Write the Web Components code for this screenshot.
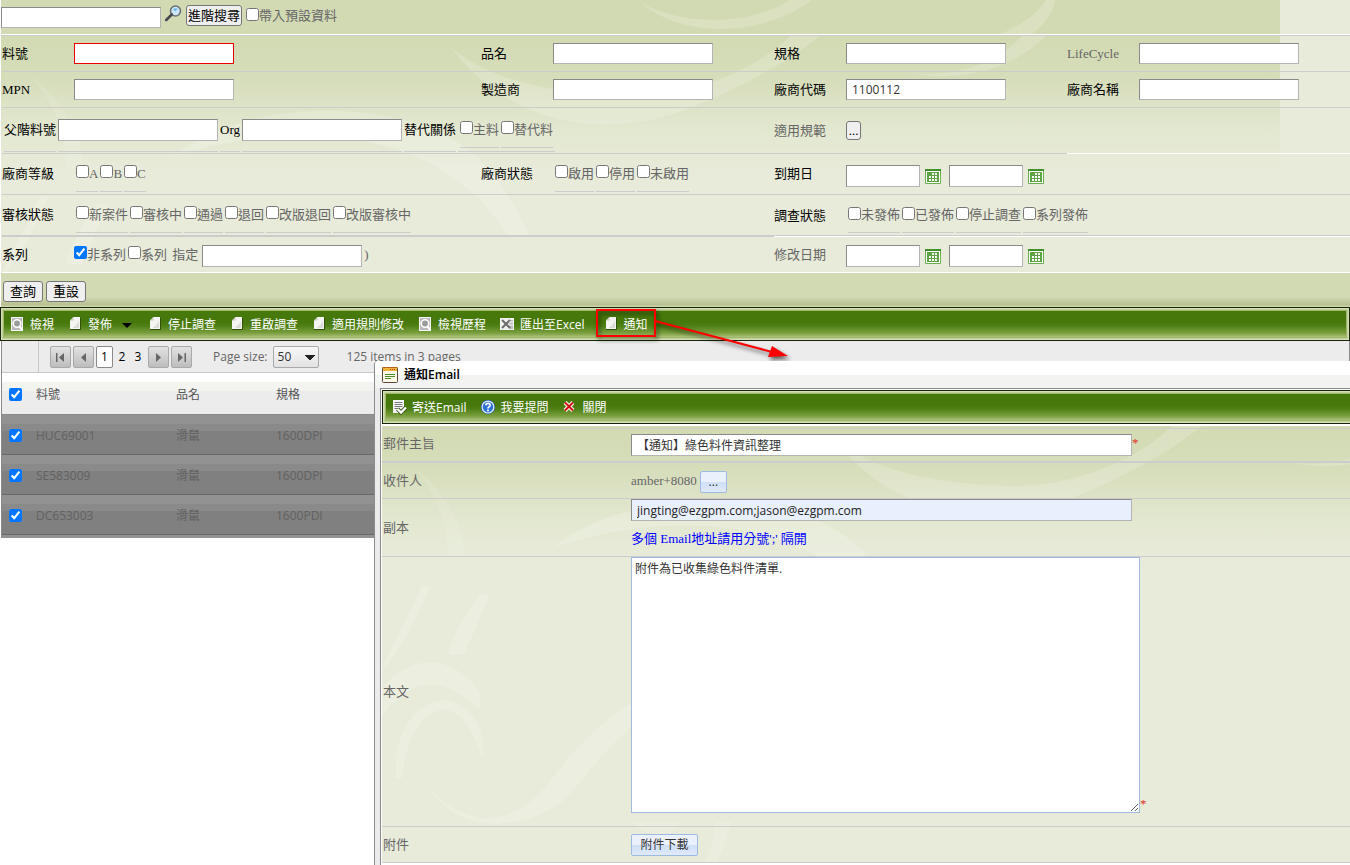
<!DOCTYPE html>
<html lang="zh-Hant">
<head>
<meta charset="utf-8">
<title>綠色料件查詢</title>
<style>
html, body { margin: 0; background: #fff; }
body { font-family: "Liberation Serif", "Noto Sans CJK TC", serif; font-size: 13px; line-height: 18px; color: #000; }
</style>
</head>
<body>
<parts-page></parts-page>

<script>
const UI = '"Open Sans", "Noto Sans CJK TC", sans-serif';

/* Leaf-swirl backdrop shared by the search form and the dialog form. */
const leaf = `<svg xmlns="http://www.w3.org/2000/svg" width="1280" height="440">
<defs><linearGradient id="g" x1="0" y1="0" x2="0" y2="1"><stop offset="0" stop-color="#d2dab3"/><stop offset=".3" stop-color="#d6ddba"/><stop offset=".7" stop-color="#e3e8d1"/><stop offset="1" stop-color="#e8ebda"/></linearGradient></defs>
<rect width="1280" height="138" fill="url(#g)"/>
<g fill="#fff" fill-opacity=".18">
<path d="M450 10C510 92 610 104 690 72C760 44 800 16 820 0H790C760 30 700 58 640 60C560 60 490 46 450 10z"/>
<path d="M905 36C960 44 1000 24 1022 0H1046C1020 26 970 50 905 36z"/>
<path d="M30 40C50 60 64 90 66 130H84C82 100 60 60 30 40z" fill-opacity=".1"/>
<path d="M170 122C230 74 340 60 430 92C480 112 506 150 530 200H508C480 156 440 122 370 106C300 92 230 102 170 122z"/>
<path d="M0 262C30 226 70 228 98 266V284C60 248 30 250 0 290z"/>
<path d="M14 352C10 306 36 272 66 274C96 282 104 312 100 332C88 294 74 282 58 284C34 290 24 320 20 352z"/>
<path d="M48 362C90 410 140 396 172 350C210 300 260 260 320 250C250 290 220 330 184 372C150 402 80 414 48 362z"/>
<path d="M98 168H108C96 196 90 212 82 228H66C70 210 84 186 98 168zM40 160H48C36 190 20 224 0 244C10 216 28 190 40 160z"/>
<path d="M250 396H300C296 412 260 412 250 396zM334 396H350C344 412 340 426 334 440H320C328 426 332 412 334 396z" fill-opacity=".14"/>
</g></svg>`;
const swirl = `<svg xmlns="http://www.w3.org/2000/svg" width="1280" height="34"><rect width="1280" height="34" fill="#d2dab3"/><g fill="#fff" fill-opacity=".18"><path d="M640 2C680 26 750 26 790 0H812C770 32 690 44 640 2z"/><path d="M1000 34C1025 24 1040 10 1046 0H1056C1052 12 1044 26 1032 34z"/></g></svg>`;
const svgUrl = s => `url("data:image/svg+xml,${encodeURIComponent(s)}")`;
document.documentElement.style.setProperty('--leaf', svgUrl(leaf));
document.documentElement.style.setProperty('--swirl', svgUrl(swirl));

const INPUT_CSS = `
input[type=text], textarea { box-sizing: border-box; margin: 0; border: 1px solid; border-color: #8a8a8a #b4b4b4 #b4b4b4 #8a8a8a; border-radius: 0; background: #fff; font: 12px/16px ${UI}; color: #333; padding: 2px 5px; outline: 0; }
input[type=text] { width: 160px; height: 21px; flex: none; }`;
const BUTTON_CSS = `
button { box-sizing: border-box; height: 21px; margin: 0; padding: 0 1px; border: 1px solid #767676; border-radius: 3px; background: #efefef; color: #000; font: 13px/18px "Liberation Serif", "Noto Sans CJK TC", serif; }`;

class Base extends HTMLElement {
  connectedCallback() {
    if (this.shadowRoot) return;
    this.attachShadow({ mode: 'open' }).innerHTML = `<style>${this.css()}</style>${this.html()}`;
  }
  attr(n) { return this.getAttribute(n) || ''; }
  css() { return ''; }
  html() { return '<slot></slot>'; }
}

const ICONS = {
  search: `<circle cx="10.500" cy="6" r="5" fill="#cfe8f8" stroke="#6b7076" stroke-width="1.600"/><path d="M8 4.500q2.500-2.500 5 0q-2 0-2.500 2q-1.500-1-2.500-2z" fill="#6fb7ec"/><path d="M6.800 9.500L1.200 15" stroke="#454a50" stroke-width="2.600" stroke-linecap="round"/>`,
  calendar: `<path d="M.5 1.500h15v13h-15z" fill="#fff" stroke="#6ab04f"/><path d="M0 0h16v2H0z" fill="#3f8f2d"/><path d="M2 3h12v10H2z" fill="#5da544"/><path d="M7 4h2v2H7zM10 4h2v2h-2zM4 7h2v2H4zM7 7h2v2H7zM10 7h2v2h-2zM4 10h2v2H4zM7 10h2v2H7zM10 10h2v2h-2z" fill="#fff"/>`,
  view: `<path d="M2 1h12v14H2z" fill="#f6f6f6"/><path d="M3 2h10v12H3z" fill="#b9b9b9"/><circle cx="8" cy="7.500" r="3.700" fill="#999" stroke="#fff" stroke-width="1.600"/><path d="M10.500 10.500l3 3.500" stroke="#fff" stroke-width="2"/>`,
  doc: `<path d="M6.500 1H13v12H3V4.500z" fill="#f4f4f0"/><path d="M3 4.500L6.500 1v3.500z" fill="#c9cfc0"/><path d="M3 13.500h10.500V2" fill="none" stroke="#31500c"/><path d="M10 8l2-3v7H6z" fill="#dcdcd8"/>`,
  excel: `<path d="M1 2h14v12H1z" fill="#f1f1f1"/><path d="M10 4h4v9h-4z" fill="#bcbcbc"/><path d="M3 4l8 8M11 4l-8 8" stroke="#6b6b6b" stroke-width="2"/><path d="M10 6h4M10 9h4" stroke="#fff"/>`,
  send: `<path d="M2 1h11v13H2z" fill="#f7f7f7"/><path d="M3.500 3.500h8M3.500 5.500h8M3.500 7.500h8M3.500 9.500h5" stroke="#777"/><path d="M6.500 10l3.500 3.500L15 8.500" fill="none" stroke="#33500f" stroke-width="4"/><path d="M6.500 10l3.500 3.500L15 8.500" fill="none" stroke="#fff" stroke-width="2.400"/>`,
  help: `<circle cx="8" cy="8" r="7.200" fill="#1c4fa6"/><circle cx="8" cy="8" r="5.900" fill="#2d72d2" stroke="#dcebff" stroke-width="1.300"/><path d="M5.900 6.400C6 3.600 10.400 3.900 10.100 6.400C9.900 7.800 8 7.800 8 9.500" fill="none" stroke="#fff" stroke-width="1.700"/><path d="M7.100 10.600h1.800v1.700H7.100z" fill="#fff"/>`,
  close: `<path d="M3 3.500l8 8M11 3.500l-8 8" stroke="#fff" stroke-width="4"/><path d="M3 3.500l8 8M11 3.500l-8 8" stroke="#d01010" stroke-width="2"/>`,
  form: `<rect x=".5" y=".5" width="15" height="15" rx="1" fill="#fdfbe8" stroke="#5a4636"/><path d="M1 1h14v3H1z" fill="#f0b63c"/><path d="M.5 .5h15" stroke="#b5651c"/><path d="M8 2.500h6" stroke="#c23a10" stroke-dasharray="1 1"/><path d="M3 7.500h10M3 9.500h10M3 11.500h6" stroke="#4f8a2a"/>`
};
customElements.define('ui-icon', class extends Base {
  css() { return `:host { display: block; width: 16px; height: 16px; flex: none; } svg { display: block; overflow: visible; }`; }
  html() { return `<svg width="16" height="16" viewBox="0 0 16 16" fill="none" aria-hidden="true">${ICONS[this.attr('name')]}</svg>`; }
});

customElements.define('check-item', class extends Base {
  css() { return `:host { display: block; box-sizing: border-box; height: 35px; border-bottom: 1px solid #ccc; color: #666; }
    :host([plain]) { border: 0; height: auto; }
    label { display: flex; align-items: center; height: 100%; white-space: nowrap; }
    input { width: 13px; height: 13px; margin: 0 0 4px; flex: none; }`; }
  html() { return `<label><input type="checkbox" ${this.hasAttribute('checked') ? 'checked' : ''}><slot></slot></label>`; }
});

/* A labelled text box; "compact" is the underlined inline form. */
customElements.define('text-cell', class extends Base {
  css() { return `:host { display: flex; align-items: center; box-sizing: border-box; min-width: 0; border-bottom: 1px solid #ccc; }
    :host([muted]) { color: #666; }
    label { width: 72px; flex: none; white-space: nowrap; }
    :host([compact]) { gap: 2px; border: 0; height: 42px; }
    :host([compact]) label { width: auto; }
    :host([compact]) label, :host([compact]) span { display: flex; align-items: center; box-sizing: border-box; height: 42px; border-bottom: 1px solid #ccc; }
    ${INPUT_CSS}
    :host([compact]) input[type=text] { height: 22px; }
    :host([required]) input[type=text] { border-color: #e00; }`; }
  html() { return `<label for="box">${this.attr('label')}</label><span><input id="box" type="text" value="${this.attr('value')}"></span>`; }
});

/* A labelled group of arbitrary controls. */
customElements.define('group-cell', class extends Base {
  css() { return `:host { display: flex; align-items: center; box-sizing: border-box; min-width: 0; border-bottom: 1px solid var(--line, #ccc); }
    :host([muted]) .name { color: #666; }
    .name { width: 72px; flex: none; white-space: nowrap; }
    .items { display: flex; align-items: center; gap: 2px; }
    :host([inset]) .items { padding-left: 2px; }`; }
  html() { return `${this.attr('label') ? `<span class="name">${this.attr('label')}</span>` : ''}<div class="items" role="group" aria-label="${this.attr('label') || '料件'}"><slot></slot></div>`; }
});

customElements.define('date-range', class extends Base {
  css() { return `:host { display: flex; align-items: center; gap: 5px; padding-top: 3px; }
    ${INPUT_CSS} input[type=text] { width: 74px; height: 22px; }
    ui-icon { margin-top: 2px; }
    ui-icon + input { margin-left: 3px !important; }`; }
  html() { const n = this.attr('label'); return `<input type="text" aria-label="${n} 起"><ui-icon name="calendar"></ui-icon><input type="text" aria-label="${n} 迄"><ui-icon name="calendar"></ui-icon>`; }
});

customElements.define('search-bar', class extends Base {
  css() { return `:host { display: flex; align-items: flex-start; height: 34px; margin-left: 1px; border-bottom: 1px solid #fff; background: var(--swirl) -1px 0 no-repeat #e8ebda; }
    ${INPUT_CSS} ${BUTTON_CSS}
    input[type=text] { margin-top: 7px; }
    ui-icon { margin: 5px 5px 0 4px; }
    button { margin-top: 5px; }
    check-item { margin: 7px 0 0 4px; }`; }
  html() { return `<input type="text" aria-label="搜尋"><ui-icon name="search"></ui-icon><button type="button">進階搜尋</button><check-item plain>帶入預設資料</check-item>`; }
});

customElements.define('search-form', class extends Base {
  css() { return `:host { display: block; margin-left: 1px; border-top: 1px solid #ccc; background: var(--leaf) -1px 0 no-repeat #e8ebda; }
    .row { display: grid; grid-template-columns: minmax(0, 479fr) minmax(0, 293fr) minmax(0, 293fr) minmax(0, 283fr); height: 36px; padding-left: 1px; }
    .tall { height: 46px; } .mid { height: 41px; } .dbl { height: 42px; }
    .wide { grid-column: span 2; }
    .dbl group-cell { border-bottom: 1px solid #ccc; }
    .dbl .wide:first-child { border-bottom-width: 2px; }
    .dbl .late { box-shadow: inset 0 -1px #ccc; border-bottom-color: #fff; }
    .last { --line: #fff; }
    .blank { border-bottom: 1px solid #fff; }
    .sub { display: flex; align-items: center; box-sizing: border-box; height: 42px; gap: 2px; padding: 0 2px; border-bottom: 1px solid #ccc; }
    .cap { display: flex; align-items: center; box-sizing: border-box; height: 42px; border-bottom: 1px solid #ccc; white-space: nowrap; }
    ${INPUT_CSS} ${BUTTON_CSS}
    .last input[type=text] { height: 22px; margin: 2px 0 0 2px; }
    .muted { color: #666; white-space: nowrap; }
    .dots { width: 15px; height: 19px; padding: 0; }`; }
  html() {
    const checks = (...a) => a.map(t => `<check-item>${t}</check-item>`).join('');
    return `
    <div class="row"><text-cell label="料號" required></text-cell><text-cell label="品名"></text-cell><text-cell label="規格"></text-cell><text-cell label="LifeCycle" muted></text-cell></div>
    <div class="row"><text-cell label="MPN"></text-cell><text-cell label="製造商"></text-cell><text-cell label="廠商代碼" value="1100112"></text-cell><text-cell label="廠商名稱"></text-cell></div>
    <div class="row tall"><group-cell class="wide" inset><text-cell compact label="父階料號"></text-cell><text-cell compact label="Org"></text-cell><span class="cap">替代關係</span><div class="sub">${checks('主料', '替代料')}</div></group-cell>
      <group-cell label="適用規範" muted><button class="dots" type="button">...</button></group-cell><span class="blank"></span></div>
    <div class="row mid"><group-cell label="廠商等級" inset>${checks('A', 'B', 'C')}</group-cell><group-cell label="廠商狀態" inset>${checks('啟用', '停用', '未啟用')}</group-cell><group-cell class="wide" label="到期日"><date-range label="到期日"></date-range></group-cell></div>
    <div class="row dbl"><group-cell class="wide" label="審核狀態" inset>${checks('新案件', '審核中', '通過', '退回', '改版退回', '改版審核中')}</group-cell><group-cell class="wide late" label="調查狀態" inset>${checks('未發佈', '已發佈', '停止調查', '系列發佈')}</group-cell></div>
    <div class="row last"><group-cell class="wide" label="系列"><check-item plain checked>非系列</check-item><check-item plain>系列</check-item><label class="muted" for="series">&nbsp;指定</label><input id="series" type="text"><span class="muted">)</span></group-cell><group-cell class="wide" label="修改日期" muted><date-range label="修改日期"></date-range></group-cell></div>`;
  }
});

customElements.define('action-bar', class extends Base {
  css() { return `:host { display: flex; align-items: center; gap: 3px; box-sizing: border-box; height: 34px; margin-left: 1px; padding: 3px 2px 0; background: linear-gradient(#d2dab3 24px, #b6bf90 32px, #cdd5a9 33px); }
    ${BUTTON_CSS} button { width: 40px; }`; }
  html() { return `<button type="submit">查詢</button><button type="reset">重設</button>`; }
});

customElements.define('tool-bar', class extends Base {
  css() { return `:host { display: flex; align-items: center; gap: 13px; box-sizing: border-box; height: 34px; padding: 2px 8px 0; border: 1px solid #16240a; position: relative; z-index: 1;
      box-shadow: inset 0 0 0 1px #d5dfb7, inset 0 0 0 2px #c2d09b, inset 0 0 0 3px #9fb76b; background: linear-gradient(#47780c 14px, #4f8016 18px, #7a9f3e 25px, #9fb76b 28px, #c2d09b 30px); }`; }
});

customElements.define('tool-item', class extends Base {
  css() { return `:host { display: block; flex: none; position: relative; }
    :host([marked]) { margin-left: 5px; }
    button { display: flex; align-items: center; gap: 5px; margin: 0; padding: 0; border: 0; background: none; color: #fff; font: 12px/16px ${UI}; white-space: nowrap; }
    ui-icon { margin-bottom: 2px; }
    i { width: 0; border: solid transparent; border-width: 5px 5px 0; border-top-color: #000; margin: 0 2px 0 5px; }
    svg { position: absolute; left: -9px; top: -9px; overflow: visible; pointer-events: none; filter: drop-shadow(2px 3px 2px rgba(0, 0, 0, .6)); }`; }
  html() { return `<button type="button"><ui-icon name="${this.attr('icon')}"></ui-icon><span><slot></slot></span>${this.hasAttribute('menu') ? '<i></i>' : ''}</button>
    ${this.hasAttribute('marked') ? `<svg width="200" height="60" fill="none" aria-hidden="true"><rect x="3" y="3" width="58" height="26" stroke="#f00" stroke-width="2"/><path d="M61 14L182 46" stroke="#f00" stroke-width="2"/><path d="M194 49L174 50L178 39z" fill="#f00"/></svg>` : ''}`; }
});

customElements.define('page-nav', class extends Base {
  css() { return `:host { display: flex; height: 31px; border-bottom: 1px solid #c8c8c8; background: #ececec; font: 12px/16px ${UI}; color: #666; }
    .edge { width: 36px; border-right: 1px solid #c8c8c8; flex: none; }
    .bar { display: flex; align-items: center; gap: 2px; padding: 1px 0 0 11px; white-space: nowrap; }
    button { box-sizing: border-box; width: 21px; height: 22px; padding: 0; border: 1px solid #a9a9a9; border-radius: 2px; background: linear-gradient(#e2e2e2, #bdbdbd); display: grid; place-items: center; }
    nav { display: flex; gap: 2px; align-items: center; }
    a { box-sizing: border-box; width: 14px; line-height: 20px; text-align: center; color: #000; text-decoration: none; border: 1px solid transparent; }
    a[aria-current] { width: 17px; background: #fff; border-color: #8a8a8a; border-radius: 2px; }
    a:nth-of-type(3) { margin-right: 1px; }
    .size { margin: 0 3px 0 19px; }
    select { appearance: none; box-sizing: border-box; width: 46px; height: 22px; padding: 0 4px; border: 1px solid #a9a9a9; border-radius: 2px; color: #333; font: 12px/16px ${UI};
      background: linear-gradient(45deg, transparent 50%, #222 50%) 31px 8px / 5px 5px no-repeat, linear-gradient(-45deg, transparent 50%, #222 50%) 35px 8px / 5px 5px no-repeat, linear-gradient(#f8f8f8, #e2e2e2);
      background: conic-gradient(from -45deg at 50% 100%, #222 90deg, transparent 0) 31px 8px / 10px 5px no-repeat, linear-gradient(#f8f8f8, #e2e2e2); }
    .total { margin-left: 26px; }`; }
  html() {
    const b = (n, d) => `<button type="button" aria-label="${n}"><svg width="11" height="11" aria-hidden="true"><path d="${d}" fill="#666"/></svg></button>`;
    return `<div class="edge"></div><div class="bar"><nav aria-label="頁碼">${b('第一頁', 'M1 1h1.500v9H1zM9 1v9L4 5.500z')}${b('上一頁', 'M8 1v9L3 5.500z')}
      <a href="#1" aria-current="page">1</a><a href="#2">2</a><a href="#3">3</a>${b('下一頁', 'M3 1v9l5-4.500z')}${b('最後頁', 'M2 1v9l5-4.500zM8.500 1H10v9H8.500z')}</nav>
      <label class="size" for="ps">Page size:</label><select id="ps"><option>50</option></select><span class="total">125 items in 3 pages</span></div>`;
  }
});

customElements.define('part-grid', class extends Base {
  css() { return `:host { display: block; border: solid #888; border-width: 0 1px; margin-left: 1px; }
    .box { border-bottom: 3px solid #929292; }
    table { width: 100%; table-layout: fixed; border-collapse: collapse; font: 12px/16px ${UI}; color: #626262; }
    th { font-weight: normal; text-align: left; color: #555; }
    th, td { padding: 2px 0 0 1px; vertical-align: middle; }
    thead tr { height: 42px; background: linear-gradient(#fff 9px, #f3f3f0 9px 18px, #ececec 18px); box-shadow: inset 0 -1px #888; }
    tbody tr { height: 40px; background: linear-gradient(#929292 9px, #8a8a8a 9px 16px, #808080 16px 39px, #686868 39px); }
    td:first-child, th:first-child { padding: 0 0 0 7px; }
    input { display: block; width: 13px; height: 13px; margin: 0; }`; }
  html() {
    const rows = [['HUC69001', '滑鼠', '1600DPI'], ['SE583009', '滑鼠', '1600DPI'], ['DC653003', '滑鼠', '1600PDI']];
    return `<page-nav></page-nav><div class="box"><table><colgroup><col style="width:33px"><col style="width:140px"><col style="width:100px"><col></colgroup>
      <thead><tr><th><input type="checkbox" checked aria-label="全選"></th><th>料號</th><th>品名</th><th>規格</th></tr></thead>
      <tbody>${rows.map(r => `<tr><td><input type="checkbox" checked aria-label="${r[0]}"></td>${r.map(c => `<td>${c}</td>`).join('')}</tr>`).join('')}</tbody></table></div>`;
  }
});

customElements.define('mail-dialog', class extends Base {
  css() { return `:host { display: flex; flex-direction: column; box-sizing: border-box; border: solid #8b8b8b; border-width: 0 0 0 1px; border-top-left-radius: 4px; background: #ebebeb; overflow: hidden; }
    header { display: flex; align-items: center; gap: 6px; height: 27px; flex: none; padding: 0 7px; box-sizing: border-box; background: linear-gradient(#fff 14px, #f3f3f2 14px); }
    h2 { margin: 0; font: 600 12px/16px ${UI}; }
    .body { flex: 1; margin-left: 5px; border: solid #888; border-width: 1px 0 0 1px; padding: 1px 0 0 1px; background: #fff; }
    tool-bar { margin-right: -4px; }
    form { margin-top: 2px; background: var(--leaf) no-repeat #e8ebda; padding-top: 2px; color: #666; }
    .row { display: grid; grid-template-columns: 248px minmax(0, 1fr); align-items: center; box-sizing: border-box; height: 36px; padding-left: 1px; border-bottom: 1px solid #ccc; }
    .row:first-child { height: 35px; border-top: 1px solid #ccc; border-bottom-width: 2px; }
    .row.cc { height: 58px; } .row.text { height: 270px; }
    .val { display: flex; align-items: center; gap: 3px; }
    ${INPUT_CSS}
    .val input[type=text] { width: 501px; height: 22px; }
    .row:first-child .val { gap: 0; align-items: flex-start; }
    .row:first-child label { padding-bottom: 2px; }
    .cc .val { display: block; align-self: start; }
    .cc input[type=text] { display: block; background: #e8effd; color: #222; }
    .cc p { margin: 9px 0 0; color: #00f; }
    .text .val { align-self: start; align-items: flex-end; gap: 0; }
    textarea { width: 509px; height: 256px; border-color: #a2bbdc; padding: 3px; }
    b { color: #e0301e; font-weight: normal; }
    button { box-sizing: border-box; height: 22px; padding: 0; border: 1px solid #9dbbe0; border-radius: 2px; color: #333; font: 12px/18px ${UI}; background: linear-gradient(#eaf1fd 50%, #cfdff5 50%, #dfe9f9); }
    .pick { width: 27px; margin-top: 3px; } .load { width: 67px; }`; }
  html() { return `<header><ui-icon name="form"></ui-icon><h2>通知Email</h2></header>
    <div class="body"><tool-bar><tool-item icon="send">寄送Email</tool-item><tool-item icon="help">我要提問</tool-item><tool-item icon="close">關閉</tool-item></tool-bar>
    <form>
      <div class="row"><label for="s">郵件主旨</label><div class="val"><input id="s" type="text" value="【通知】綠色料件資訊整理"><b>*</b></div></div>
      <div class="row"><span>收件人</span><div class="val"><span>amber+8080</span><button class="pick" type="button">...</button></div></div>
      <div class="row cc"><label for="c">副本</label><div class="val"><input id="c" type="text" value="jingting@ezgpm.com;jason@ezgpm.com"><p>多個 Email地址請用分號';' 隔開</p></div></div>
      <div class="row text"><label for="t">本文</label><div class="val"><textarea id="t">附件為已收集綠色料件清單.</textarea><b>*</b></div></div>
      <div class="row"><span>附件</span><div class="val"><button class="load" type="button">附件下載</button></div></div>
    </form></div>`; }
});

customElements.define('parts-page', class extends Base {
  css() { return `:host { display: block; position: relative; min-height: 100vh; overflow: hidden; }
    mail-dialog { position: absolute; left: 374px; right: 0; top: 361px; bottom: 0; z-index: 2; }`; }
  html() { return `<search-bar></search-bar><search-form></search-form><action-bar></action-bar>
    <tool-bar><tool-item icon="view">檢視</tool-item><tool-item icon="doc" menu>發佈</tool-item><tool-item icon="doc">停止調查</tool-item><tool-item icon="doc">重啟調查</tool-item><tool-item icon="doc">適用規則修改</tool-item><tool-item icon="view">檢視歷程</tool-item><tool-item icon="excel">匯出至Excel</tool-item><tool-item icon="doc" marked>通知</tool-item></tool-bar>
    <part-grid></part-grid><mail-dialog role="dialog" aria-label="通知Email"></mail-dialog>`; }
});
</script>
</body>
</html>
